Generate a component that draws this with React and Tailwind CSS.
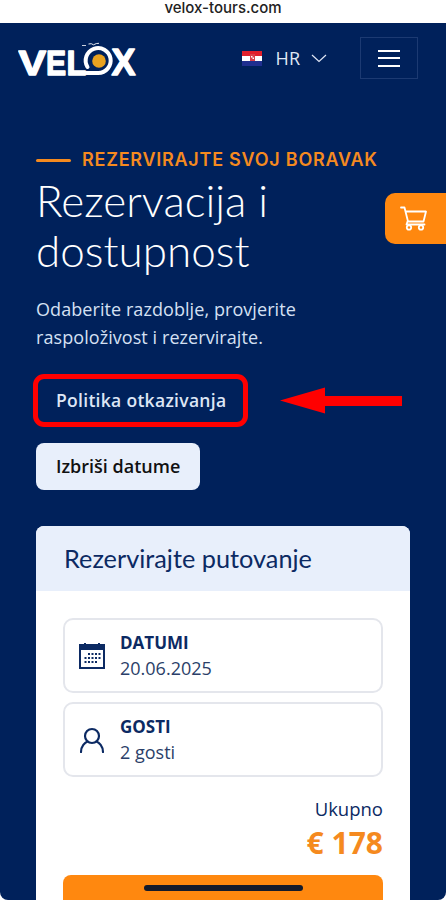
import React from "react";

const Logo = () => (
  <svg width="120" height="40" viewBox="0 0 120 40" className="block">
    <g fill="#fff" stroke="#fff" strokeWidth="1.4" strokeLinejoin="round" fontFamily="'Liberation Sans', sans-serif" fontWeight="700" fontSize="36">
      <text transform="translate(0.5 32.5) scale(1.15 1)">V</text>
      <text transform="translate(28 32.5) scale(0.84 1)">E</text>
      <text transform="translate(48.5 32.5) scale(0.9 1)">L</text>
      <text transform="translate(93.5 32.5)">X</text>
    </g>
    <path d="M58 31H80A12.500 12.500 0 1 0 69.500 25" fill="none" stroke="#fff" strokeWidth="4" strokeLinecap="round" />
    <circle cx="81" cy="19" r="6.800" fill="#e9a21f" />
    <path d="M70.500 2q3-1 5 .8q3-1.800 5.500-1.500" fill="none" stroke="#fff" strokeWidth="0.900" />
    <path d="M68 3.500h-4" stroke="#fff" strokeWidth="0.800" />
  </svg>
);

const Flag = () => (
  <svg width="20" height="15" viewBox="0 0 20 15" className="block">
    <rect width="20" height="5" fill="#e0202c" />
    <rect y="5" width="20" height="5" fill="#fff" />
    <rect y="10" width="20" height="5" fill="#1f2f8f" />
    <rect x="8" y="3" width="5" height="7" fill="#d9404a" />
    <rect x="9" y="5" width="1.500" height="1.500" fill="#fff" />
    <rect x="10.500" y="6.500" width="1.500" height="1.500" fill="#fff" />
  </svg>
);

const CalendarIcon = () => (
  <svg width="26" height="27" viewBox="0 0 26 27" fill="none" className="shrink-0">
    <rect x="1" y="3" width="24" height="23" stroke="#0c2a63" strokeWidth="2" />
    <rect x="1" y="3" width="24" height="5" fill="#0c2a63" />
    <path d="M6 1v4M20 1v4" stroke="#0c2a63" strokeWidth="2" />
    <g fill="#0c2a63">
      <rect x="9" y="11" width="2" height="2" /><rect x="12.500" y="11" width="2" height="2" /><rect x="16" y="11" width="2" height="2" /><rect x="19.500" y="11" width="2" height="2" />
      <rect x="5.500" y="15" width="2" height="2" /><rect x="9" y="15" width="2" height="2" /><rect x="12.500" y="15" width="2" height="2" /><rect x="16" y="15" width="2" height="2" /><rect x="19.500" y="15" width="2" height="2" />
      <rect x="5.500" y="19" width="2" height="2" /><rect x="9" y="19" width="2" height="2" /><rect x="12.500" y="19" width="2" height="2" /><rect x="16" y="19" width="2" height="2" />
    </g>
  </svg>
);

const PersonIcon = () => (
  <svg width="26" height="26" viewBox="0 0 26 26" fill="none" className="shrink-0">
    <circle cx="13" cy="9" r="7" stroke="#0c2a63" strokeWidth="2.200" />
    <path d="M2 25c0-6 4-9.500 6.500-10.500M24 25c0-6-4-9.500-6.500-10.500" stroke="#0c2a63" strokeWidth="2.200" strokeLinecap="round" />
  </svg>
);

const CartIcon = () => (
  <svg width="27" height="25" viewBox="0 0 27 25" fill="none">
    <path d="M1 1.500h3.500L8 15.500h15.500L26 5.500H5.500M7.500 15.500l-1 3h18" stroke="#fff" strokeWidth="1.800" strokeLinecap="round" strokeLinejoin="round" />
    <circle cx="9" cy="21.500" r="2.200" stroke="#fff" strokeWidth="1.800" />
    <circle cx="21" cy="21.500" r="2.200" stroke="#fff" strokeWidth="1.800" />
  </svg>
);

const InfoRow = ({ icon, label, value }) => (
  <div className="flex h-[75px] items-center gap-[15px] rounded-[10px] border-2 border-[#e4e6ec] pl-[14px]">
    {icon}
    <div>
      <div className="text-[17px] leading-[25px] font-bold text-[#0c2a63]">{label}</div>
      <div className="text-[18px] leading-[27px] text-[#2b3f69]">{value}</div>
    </div>
  </div>
);

export default function App() {
  return (
    <div className="relative h-[900px] w-[446px] overflow-hidden bg-white font-['Open_Sans',sans-serif]">
      <div className="flex h-[23px] justify-center pt-[1px] font-['Inter',sans-serif] text-[15px] leading-[14px] font-medium text-[#222]">
        velox-tours.com
      </div>

      <div className="h-[877px] rounded-b-[8px] bg-[#00215b]">
        <header className="flex h-[78px] items-center pl-[18px] pr-[28px]">
          <Logo />
          <div className="mb-[8px] ml-auto flex items-center">
            <Flag />
            <span className="ml-[14px] text-[18px] text-[#dfe6f4]">HR</span>
            <svg width="16" height="9" viewBox="0 0 16 9" fill="none" className="ml-[11px]">
              <path d="M1 1l7 6.500L15 1" stroke="#dfe6f4" strokeWidth="1.200" />
            </svg>
            <button className="ml-[33px] flex h-[42px] w-[58px] flex-col items-center justify-center gap-[5.500px] border border-[#1c3a72]">
              <span className="h-[2px] w-[22px] bg-white" />
              <span className="h-[2px] w-[22px] bg-white" />
              <span className="h-[2px] w-[22px] bg-white" />
            </button>
          </div>
        </header>

        <main className="px-[36px] pt-[49px]">
          <div className="flex items-center gap-[11px]">
            <span className="h-[3px] w-[35px] rounded-full bg-[#f58a1f]" />
            <span className="font-['Inter',sans-serif] text-[18px] leading-[20px] font-semibold tracking-[0.75px] text-[#f58a1f]">
              REZERVIRAJTE SVOJ BORAVAK
            </span>
          </div>
          <h1 className="mt-[5px] font-['Lato',sans-serif] text-[44px] leading-[50px] font-light text-white">
            Rezervacija i<br />dostupnost
          </h1>
          <p className="mt-[20px] text-[18px] leading-[28px] tracking-[0.07px] text-[#d5e0f3]">
            Odaberite razdoblje, provjerite<br />raspoloživost i rezervirajte.
          </p>

          <button className="mt-[28px] ml-[2px] block h-[43px] w-[205px] rounded-[6px] pl-[18px] text-left text-[17.500px] font-semibold tracking-[0.3px] text-[#dde6f5] outline-[5px] outline-[#ff0000]">
            Politika otkazivanja
          </button>

          <button className="mt-[21px] block h-[47px] w-[164px] rounded-[8px] bg-[#e8effb] pl-[20px] text-left text-[18px] font-semibold text-[#111]">
            Izbriši datume
          </button>

          <section className="mt-[36px] w-[374px] overflow-hidden rounded-t-[8px] bg-white">
            <div className="flex h-[65px] items-center bg-[#e8effb] pl-[28px] font-['Lato',sans-serif] text-[25.300px] text-[#0c2a63]">
              Rezervirajte putovanje
            </div>
            <div className="px-[27px] pt-[27px]">
              <InfoRow icon={<CalendarIcon />} label="DATUMI" value="20.06.2025" />
              <div className="h-[9px]" />
              <InfoRow icon={<PersonIcon />} label="GOSTI" value="2 gosti" />
              <div className="mt-[18px] text-right text-[18.500px] leading-[28px] text-[#0c2a63]">Ukupno</div>
              <div className="text-right text-[30px] leading-[40px] font-bold text-[#f58a1f]">€ 178</div>
              <div className="mt-[12px] h-[30px] rounded-t-[8px] bg-[#ff880f]" />
            </div>
          </section>
        </main>
      </div>

      {/* floating cart tab */}
      <div className="absolute right-0 top-[193px] flex h-[51px] w-[61px] items-center rounded-l-[10px] bg-[#ff880f] pl-[15px]">
        <CartIcon />
      </div>

      {/* annotation arrow */}
      <svg width="124" height="28" viewBox="0 0 124 28" className="absolute left-[280px] top-[387px]">
        <path d="M0 13.500L45 0.500V9H122V19H45V26.500Z" fill="#ff0000" />
      </svg>

      {/* home indicator */}
      <div className="absolute left-[144px] top-[885px] h-[6px] w-[159px] rounded-full bg-[#141a2b]" />
    </div>
  );
}
